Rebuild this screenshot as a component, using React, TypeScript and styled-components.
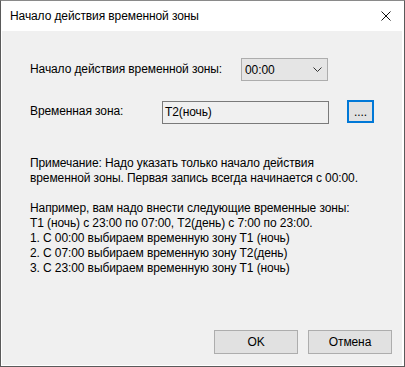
import React from "react";
import styled, { createGlobalStyle } from "styled-components";

const Global = createGlobalStyle`
  html, body { margin: 0; padding: 0; background: #ffffff; }
  body { font-family: "Segoe UI", "Liberation Sans", Arial, sans-serif; }
`;

const Window = styled.div`
  box-sizing: border-box;
  width: 405px;
  height: 367px;
  border: 1px solid #5a5a5a;
  border-top-color: #8a8a8a;
  background: #ffffff;
  display: flex;
  flex-direction: column;
  padding: 0 2px 1px 1px;
  font-size: 12px;
  letter-spacing: -0.1px;
  color: #000;
`;

const TitleBar = styled.div`
  height: 30px;
  flex: none;
  display: flex;
  align-items: center;
  justify-content: space-between;
  padding: 0 11px 0 8px;
`;

const TitleText = styled.span`
  font-size: 12px;
  color: #000;
  margin-top: -1px;
`;

const CloseIcon = styled.svg`
  width: 10px;
  height: 10px;
  margin-top: -1px;
`;

const Client = styled.div`
  flex: 1;
  background: #f0f0f0;
  display: flex;
  flex-direction: column;
  padding: 27px 0 0 28px;
`;

const Row = styled.div<{ $top?: number }>`
  display: flex;
  align-items: flex-start;
  margin-top: ${(p) => p.$top ?? 0}px;
`;

const Label = styled.span<{ $width: number }>`
  width: ${(p) => p.$width}px;
  flex: none;
  height: 23px;
  line-height: 23px;
  white-space: nowrap;
`;

const Combo = styled.div`
  box-sizing: border-box;
  width: 87px;
  height: 23px;
  border: 1px solid #adadad;
  background: #e5e5e5;
  display: flex;
  align-items: center;
  justify-content: space-between;
  padding: 0 5px 0 3px;
`;

const TextBox = styled.div`
  box-sizing: border-box;
  width: 167px;
  height: 23px;
  margin-top: 1px;
  border: 1px solid #7a7a7a;
  background: #f0f0f0;
  padding-left: 2px;
  line-height: 21px;
`;

const DotsButton = styled.div`
  box-sizing: border-box;
  width: 27px;
  height: 23px;
  margin-left: 18px;
  border: 2px solid #0078d7;
  background: #e1e1e1;
  display: flex;
  justify-content: center;
  align-items: center;
  line-height: 19px;
  padding-top: 1px;
`;

const Note = styled.div`
  margin-top: 32px;
  line-height: 15px;
`;

const Line = styled.div`
  white-space: nowrap;
  height: 15px;
`;

const Footer = styled.div`
  margin-top: auto;
  display: flex;
  justify-content: flex-end;
  gap: 10px;
  padding: 0 10px 11px 0;
`;

const Button = styled.div`
  box-sizing: border-box;
  width: 84px;
  height: 24px;
  border: 1px solid #adadad;
  background: #e1e1e1;
  display: flex;
  align-items: center;
  justify-content: center;
`;

export default function App() {
  return (
    <>
      <Global />
      <Window>
        <TitleBar>
          <TitleText>Начало действия временной зоны</TitleText>
          <CloseIcon viewBox="0 0 10 10">
            <path d="M0.5 0.5 L9.5 9.5 M9.5 0.5 L0.5 9.5" stroke="#111" strokeWidth="1" fill="none" />
          </CloseIcon>
        </TitleBar>
        <Client>
          <Row>
            <Label $width={211}>Начало действия временной зоны:</Label>
            <Combo>
              <span>00:00</span>
              <svg width="9" height="5" viewBox="0 0 9 5">
                <path d="M0.5 0.5 L4.5 4.5 L8.5 0.5" stroke="#333" strokeWidth="1" fill="none" />
              </svg>
            </Combo>
          </Row>
          <Row $top={19}>
            <Label $width={132}>Временная зона:</Label>
            <TextBox>T2(ночь)</TextBox>
            <DotsButton>....</DotsButton>
          </Row>
          <Note>
            <Line>Примечание: Надо указать только начало действия</Line>
            <Line>временной зоны. Первая запись всегда начинается с 00:00.</Line>
            <Line />
            <Line>Например, вам надо внести следующие временные зоны:</Line>
            <Line>T1 (ночь) с 23:00 по 07:00, T2(день) с 7:00 по 23:00.</Line>
            <Line>1. С 00:00 выбираем временную зону T1 (ночь)</Line>
            <Line>2. С 07:00 выбираем временную зону T2(день)</Line>
            <Line>3. С 23:00 выбираем временную зону T1 (ночь)</Line>
          </Note>
          <Footer>
            <Button>OK</Button>
            <Button>Отмена</Button>
          </Footer>
        </Client>
      </Window>
    </>
  );
}
